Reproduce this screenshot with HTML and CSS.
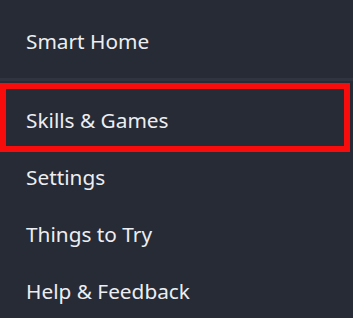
FILE: index.html
```html
<!DOCTYPE html>
<html lang="en">
<head>
<meta charset="utf-8">
<link rel="stylesheet" href="styles.css">
</head>
<body>
<nav class="menu">
  <div class="item">Smart Home</div>
  <div class="divider"></div>
  <div class="highlight">
    <div class="item item--boxed">Skills &amp; Games</div>
  </div>
  <div class="item">Settings</div>
  <div class="item">Things to Try</div>
  <div class="item">Help &amp; Feedback</div>
</nav>
</body>
</html>
```

FILE: styles.css
```css
html, body {
  margin: 0;
  padding: 0;
  background: #262b36;
  overflow: hidden;
}
.menu {
  width: 353px;
  height: 318px;
  padding-top: 16px;
  box-sizing: border-box;
  font-family: "Noto Sans", "Open Sans", sans-serif;
  font-size: 20.8px;
  color: #eceef1;
}
.item {
  padding: 0 0 6px 26px;
  line-height: 51px;
  white-space: nowrap;
}
.divider {
  height: 3px;
  margin: 5px 0 2px;
  background: #2f3440;
}
.highlight {
  width: 350px;
  box-sizing: border-box;
  border: 6px solid #f80c0c;
}
.item--boxed {
  padding: 6px 0 0 20px;
}
```
